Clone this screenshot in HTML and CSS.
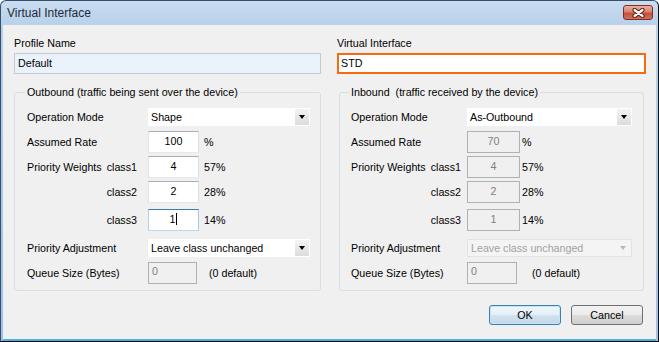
FILE: index.html
```html
<!DOCTYPE html>
<html lang="en">

<head>
    <meta charset="UTF-8">
    <title>Virtual Interface</title>
    <link rel="stylesheet" href="styles.css">
</head>

<body>

    <div class="window">

        <div class="titlebar">
            <span class="title">Virtual Interface</span>
            <span class="close">
                <svg width="13" height="10" viewBox="0 0 13 10">
                    <path d="M2.5 2 L10.5 8 M10.5 2 L2.5 8" stroke="#5a1a10" stroke-width="4.2" stroke-linecap="round" fill="none" />
                    <path d="M2.5 2 L10.5 8 M10.5 2 L2.5 8" stroke="#fff" stroke-width="2.2" stroke-linecap="round" fill="none" />
                </svg>
            </span>
        </div>

        <div class="client">

            <div class="colunas">
                <div class="coluna esquerda">
                    <div class="rotulo">Profile Name</div>
                    <div class="caixa somente-leitura">Default</div>

                    <fieldset class="grupo">
                        <legend>Outbound (traffic being sent over the device)</legend>

                        <div class="linha">
                            <span class="nome">Operation Mode</span>
                            <div class="combo">Shape<span class="seta"></span></div>
                        </div>
                        <div class="linha">
                            <span class="nome">Assumed Rate</span>
                            <div class="entrada">100</div>
                            <span class="pct">%</span>
                        </div>
                        <div class="linha">
                            <span class="nome dividido"><span>Priority Weights</span><span>class1</span></span>
                            <div class="entrada">4</div>
                            <span class="pct">57%</span>
                        </div>
                        <div class="linha">
                            <span class="nome classe">class2</span>
                            <div class="entrada">2</div>
                            <span class="pct">28%</span>
                        </div>
                        <div class="linha afastada">
                            <span class="nome classe">class3</span>
                            <div class="entrada foco">1<span class="cursor"></span></div>
                            <span class="pct">14%</span>
                        </div>
                        <div class="linha afastada">
                            <span class="nome">Priority Adjustment</span>
                            <div class="combo">Leave class unchanged<span class="seta"></span></div>
                        </div>
                        <div class="linha">
                            <span class="nome">Queue Size (Bytes)</span>
                            <div class="fila">0</div>
                            <span class="padrao">(0 default)</span>
                        </div>
                    </fieldset>
                </div>

                <div class="coluna direita">
                    <div class="rotulo">Virtual Interface</div>
                    <div class="caixa ativa">STD</div>

                    <fieldset class="grupo inbound">
                        <legend>Inbound&nbsp; (traffic received by the device)</legend>

                        <div class="linha">
                            <span class="nome">Operation Mode</span>
                            <div class="combo">As-Outbound<span class="seta"></span></div>
                        </div>
                        <div class="linha">
                            <span class="nome">Assumed Rate</span>
                            <div class="entrada desativada">70</div>
                            <span class="pct">%</span>
                        </div>
                        <div class="linha">
                            <span class="nome dividido"><span>Priority Weights</span><span>class1</span></span>
                            <div class="entrada desativada">4</div>
                            <span class="pct">57%</span>
                        </div>
                        <div class="linha">
                            <span class="nome classe">class2</span>
                            <div class="entrada desativada">2</div>
                            <span class="pct">28%</span>
                        </div>
                        <div class="linha afastada">
                            <span class="nome classe">class3</span>
                            <div class="entrada desativada">1</div>
                            <span class="pct">14%</span>
                        </div>
                        <div class="linha afastada">
                            <span class="nome">Priority Adjustment</span>
                            <div class="combo desativada">Leave class unchanged<span class="seta"></span></div>
                        </div>
                        <div class="linha">
                            <span class="nome">Queue Size (Bytes)</span>
                            <div class="fila">0</div>
                            <span class="padrao">(0 default)</span>
                        </div>
                    </fieldset>
                </div>
            </div>

            <div class="botoes">
                <div class="botao padrao-btn">OK</div>
                <div class="botao">Cancel</div>
            </div>

        </div>
    </div>

</body>

</html>
```

FILE: styles.css
```css
* {
    box-sizing: border-box;
}

body {
    margin: 0;
    font-family: "Liberation Sans", Arial, sans-serif;
    font-size: 10.7px;
    color: #000;
    background: #fff;
}

.window {
    width: 659px;
    height: 342px;
    display: flex;
    flex-direction: column;
    border: 1px solid #34506e;
    border-bottom-color: #000;
    border-right-color: #111;
    border-radius: 6px 6px 0 0;
    background: linear-gradient(#cadcf0, #b8d0ea 24px, #9fc1e6);
    padding: 0 2px;
}

.titlebar {
    height: 24px;
    display: flex;
    justify-content: space-between;
    align-items: flex-start;
    padding: 0 3px 0 4px;
}

.title {
    font-size: 12px;
    line-height: 24px;
    color: #1b2a3c;
}

.close {
    margin-top: 4px;
    width: 30px;
    height: 15px;
    border: 1px solid #7d3126;
    border-radius: 3px;
    background: linear-gradient(#eab0a4, #d9826f 45%, #c5503a 55%, #d0705c);
    display: flex;
    align-items: center;
    justify-content: center;
}

.client {
    flex: 1;
    background: #f0f0f0;
    border-bottom: 2px solid #45b6e4;
    padding: 12px 10px 0 11px;
}

.colunas {
    display: flex;
    gap: 16px;
}

.esquerda {
    width: 307px;
}

.direita {
    width: 309px;
}

.rotulo {
    line-height: 13px;
}

.caixa {
    margin-top: 3px;
    height: 21px;
    line-height: 19px;
    padding-left: 3px;
    border: 1px solid #c3cad3;
    background: #eaf2fb;
}

.caixa.ativa {
    border: 2px solid #f76b10;
    background: #fff;
    line-height: 17px;
    padding-left: 2px;
}

.grupo {
    margin: 12px 0 0;
    padding: 7px 0 6px 12px;
    border: 1px solid #d5dfe5;
    border-radius: 3px;
}

.grupo legend {
    padding: 0 2px;
    margin-left: -2px;
    line-height: 13px;
}

.inbound {
    margin: 12px 2px 0;
    padding-left: 11px;
}

.linha {
    display: flex;
    align-items: center;
    height: 22px;
}

.linha + .linha {
    margin-top: 3px;
}

.linha.afastada {
    margin-top: 6px;
}

.nome {
    width: 121px;
    flex: none;
}

.inbound .nome {
    width: 116px;
}

.dividido {
    display: flex;
    justify-content: space-between;
    padding-right: 11px;
}

.classe {
    text-align: right;
    padding-right: 11px;
}

.inbound .dividido,
.inbound .classe {
    padding-right: 6px;
}

.combo {
    width: 162px;
    height: 18px;
    background: #fff;
    display: flex;
    align-items: center;
    padding-left: 3px;
}

.inbound .combo {
    width: 165px;
}

.seta {
    margin-left: auto;
    margin-right: 1px;
    width: 14px;
    height: 16px;
    background: linear-gradient(#f4f4f4, #dcdcdc);
    position: relative;
}

.seta::after {
    content: "";
    position: absolute;
    left: 4px;
    top: 6px;
    border-left: 3.5px solid transparent;
    border-right: 3.5px solid transparent;
    border-top: 4px solid #000;
}

.combo.desativada {
    background: #f4f4f4;
    border: 1px solid #e3e3e3;
    color: #a2a2a2;
}

.combo.desativada .seta {
    background: none;
}

.combo.desativada .seta::after {
    border-top-color: #b8b8b8;
}

.entrada {
    width: 51px;
    height: 22px;
    line-height: 19px;
    text-align: center;
    background: #fff;
    border: 1px solid;
    border-color: #abadb3 #dbdfe6 #e3e9ef #e2e3ea;
}

.entrada.foco {
    border-color: #3d7bad #a4c9e3 #b7d9ed #b5cfe7;
}

.cursor {
    display: inline-block;
    width: 1px;
    height: 12px;
    background: #000;
    vertical-align: -2px;
    margin-left: 1px;
}

.entrada.desativada {
    width: 53px;
    background: #f0f0f0;
    border: 1px solid #adb2b5;
    color: #808080;
}

.pct {
    margin-left: 5px;
}

.inbound .pct {
    margin-left: 2px;
}

.fila {
    width: 49px;
    height: 22px;
    line-height: 17px;
    padding-left: 3px;
    background: #f0f0f0;
    border: 1px solid #adb2b5;
    color: #808080;
}

.inbound .fila {
    width: 50px;
}

.padrao {
    margin-left: 12px;
}

.inbound .padrao {
    margin-left: 15px;
}

.botoes {
    display: flex;
    justify-content: flex-end;
    gap: 10px;
    margin-top: 14px;
    margin-right: 3px;
}

.botao {
    width: 72px;
    height: 20px;
    border: 1px solid #707070;
    border-radius: 3px;
    background: linear-gradient(#f2f2f2, #ebebeb 50%, #dddddd 50%, #cfcfcf);
    display: flex;
    align-items: center;
    justify-content: center;
}

.padrao-btn {
    border-color: #3c7fb1;
    box-shadow: inset 0 0 0 1px #bfe6fa;
    background: linear-gradient(#eef6fb, #e4eff7 50%, #d3e3ef 50%, #c5d8e6);
}
```
